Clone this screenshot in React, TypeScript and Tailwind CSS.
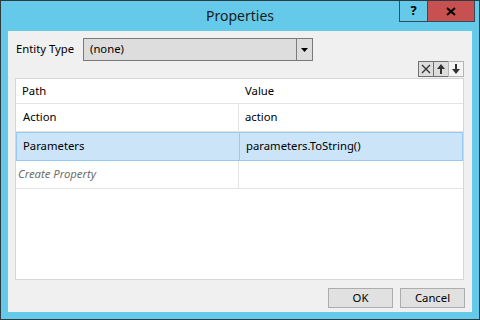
import React from 'react';

const font = { fontFamily: '"Noto Sans", "Open Sans", sans-serif' };

function MiniButton({ children, disabled }: { children: React.ReactNode; disabled?: boolean }) {
  return (
    <div
      className={`w-[16px] h-[16px] flex items-center justify-center border -ml-px first:ml-0 ${
        disabled ? 'bg-[#f4f4f4] border-[#b5b5b5]' : 'bg-[#dddddd] border-[#707070]'
      }`}
    >
      {children}
    </div>
  );
}

function Row({ path, value, selected, placeholder }: {
  path: string;
  value: string;
  selected?: boolean;
  placeholder?: boolean;
}) {
  if (selected) {
    return (
      <div className="flex h-[29px]">
        <div className="w-[224px] border border-[#99c9ef] bg-[#cce4f7] flex items-center pl-[6px] text-black">
          {path}
        </div>
        <div className="flex-1 border border-[#99c9ef] border-l-0 bg-[#cce4f7] flex items-center pl-[6px] text-black">
          {value}
        </div>
      </div>
    );
  }
  return (
    <div className="flex h-[28px] border-b border-[#e3e3e3]">
      <div
        className={`w-[223px] border-r border-[#e3e3e3] flex items-center ${
          placeholder ? 'pl-[2px] italic text-[#6d6d6d]' : 'pl-[7px] text-black'
        }`}
      >
        {path}
      </div>
      <div className="flex-1 flex items-center pl-[6px] text-black">{value}</div>
    </div>
  );
}

export default function App() {
  return (
    <div className="w-[480px] h-[320px] border border-[#2f3a40] bg-[#65c9e9] flex flex-col text-[11.3px]" style={font}>
      {/* title bar */}
      <div className="h-[30px] grid grid-cols-[1fr_auto_1fr] shrink-0">
        <div />
        <div className="text-[14px] text-[#1b1b1b] pt-[4px]">Properties</div>
        <div className="flex justify-end items-start pr-[4px]">
          <div className="w-[29px] h-[21px] border border-t-0 border-[#3a4a52] flex items-center justify-center text-[13px] font-bold text-black">
            ?
          </div>
          <div className="w-[47px] h-[21px] border border-t-0 border-l-0 border-[#3a4a52] bg-[#c75050] flex items-center justify-center">
            <svg width="10" height="9" viewBox="0 0 10 9">
              <path d="M1 1 L9 8 M9 1 L1 8" stroke="#000" strokeWidth="2" />
            </svg>
          </div>
        </div>
      </div>

      {/* client area */}
      <div className="mx-[7px] h-[281px] bg-[#f0f0f0] flex flex-col">
        <div className="flex items-center pt-[7px] pl-[8px]">
          <span className="w-[67px] text-black">Entity Type</span>
          <div className="w-[230px] h-[23px] border border-[#7a7a7a] bg-[#dddddd] flex">
            <div className="flex-1 flex items-center pl-[6px] text-black">(none)</div>
            <div className="w-[16px] border-l border-[#7a7a7a] flex items-center justify-center">
              <svg width="7" height="4" viewBox="0 0 7 4">
                <path d="M0 0 H7 L3.5 4 Z" fill="#000" />
              </svg>
            </div>
          </div>
        </div>

        <div className="flex justify-end pr-[8px]">
          <MiniButton>
            <svg width="10" height="10" viewBox="0 0 10 10">
              <path d="M1 1 L9 9 M9 1 L1 9" stroke="#333" strokeWidth="1.3" />
            </svg>
          </MiniButton>
          <MiniButton>
            <svg width="8" height="10" viewBox="0 0 8 10">
              <path d="M4 0 L8 5 H5 V10 H3 V5 H0 Z" fill="#333" />
            </svg>
          </MiniButton>
          <MiniButton disabled>
            <svg width="8" height="10" viewBox="0 0 8 10">
              <path d="M4 10 L8 5 H5 V0 H3 V5 H0 Z" fill="#333" />
            </svg>
          </MiniButton>
        </div>

        <div className="ml-[7px] mr-[8px] mt-[1px] h-[202px] border border-[#d5d5dc] bg-white flex flex-col">
          <div className="flex h-[25px] border-b border-[#e3e3e3]">
            <div className="w-[223px] flex items-center pl-[6px] text-black">Path</div>
            <div className="flex-1 flex items-center pl-[6px] text-black">Value</div>
          </div>
          <Row path="Action" value="action" />
          <Row path="Parameters" value="parameters.ToString()" selected />
          <Row path="Create Property" value="" placeholder />
        </div>

        <div className="flex justify-end gap-[7px] pr-[7px] mt-[8px]">
          <div className="w-[65px] h-[20px] border border-[#adadad] bg-[#e1e1e1] flex items-center justify-center text-black">
            OK
          </div>
          <div className="w-[65px] h-[20px] border border-[#adadad] bg-[#e1e1e1] flex items-center justify-center text-black">
            Cancel
          </div>
        </div>
      </div>
    </div>
  );
}
